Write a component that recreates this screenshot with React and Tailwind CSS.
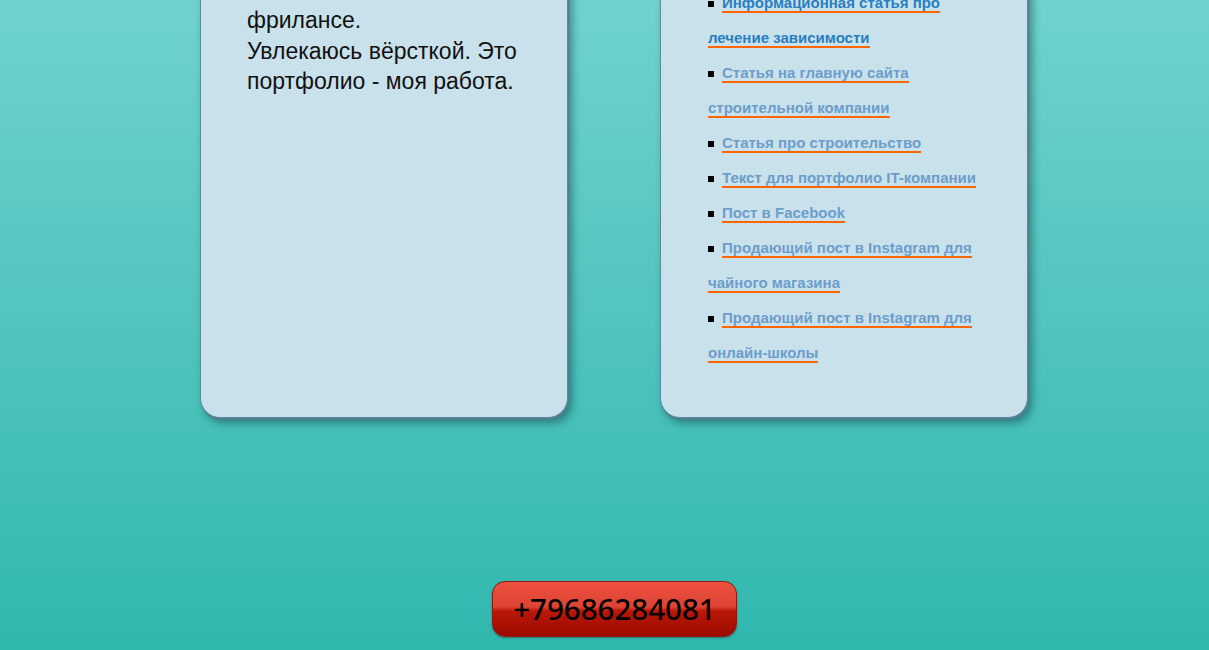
import React from "react";

const links = [
  { t: "Информационная статья про лечение зависимости", c: "text-[#2a7fc2]" },
  { t: "Статья на главную сайта строительной компании", c: "text-[#6c9dcb]" },
  { t: "Статья про строительство", c: "text-[#6c9dcb]" },
  { t: "Текст для портфолио IT-компании", c: "text-[#6c9dcb]" },
  { t: "Пост в Facebook", c: "text-[#6c9dcb]" },
  { t: "Продающий пост в Instagram для чайного магазина", c: "text-[#6c9dcb]" },
  { t: "Продающий пост в Instagram для онлайн-школы", c: "text-[#6c9dcb]" },
];

export default function App() {
  return (
    <div className="h-[650px] w-full overflow-hidden bg-[linear-gradient(to_bottom,#70d2cd,#30b7ae)] font-['Liberation_Sans',Arial,sans-serif]">
      <div className="ml-[200px] w-[828px] mt-[-60px] flex flex-col">
        <div className="flex justify-between items-stretch">
          <div className="w-[368px] rounded-[20px] border border-[#5b8c9c] bg-[#c9e1eb] shadow-[1px_2px_0_#4d7f92,4px_5px_8px_rgba(0,40,50,0.45)] pl-[46px] pr-[30px] pt-[64px]">
            <p className="text-[23px] leading-[30.5px] text-[#111]">
              фрилансе.
              <br />
              Увлекаюсь вёрсткой. Это портфолио - моя работа.
            </p>
          </div>
          <div className="w-[368px] rounded-[20px] border border-[#5b8c9c] bg-[#c9e1eb] shadow-[1px_2px_0_#4d7f92,4px_5px_8px_rgba(0,40,50,0.45)] pl-[47px] pr-[45px] pt-[44px] pb-[47px]">
            <ul className="text-[15px] leading-[35px] font-bold">
              {links.map((l, i) => (
                <li key={i}>
                  <span className="inline-block w-[6px] h-[6px] bg-black mb-[1px] mr-[8px]"></span>
                  <a className={`${l.c} border-b-2 border-[#ff6600]`} href="#">
                    {l.t}
                  </a>
                </li>
              ))}
            </ul>
          </div>
        </div>
        <div className="flex justify-center mt-[163px] pl-[1px]">
          <div className="w-[245px] h-[56px] rounded-[13px] border border-[#8e1a10] bg-[linear-gradient(to_bottom,#ee5040_0%,#dc4433_46%,#b91706_54%,#9c0b00_100%)] shadow-[0_1px_2px_rgba(0,0,0,0.35)] flex items-center justify-center">
            <span className="font-['Noto_Sans',sans-serif] font-medium text-[29.5px] leading-none text-black">+79686284081</span>
          </div>
        </div>
      </div>
    </div>
  );
}
